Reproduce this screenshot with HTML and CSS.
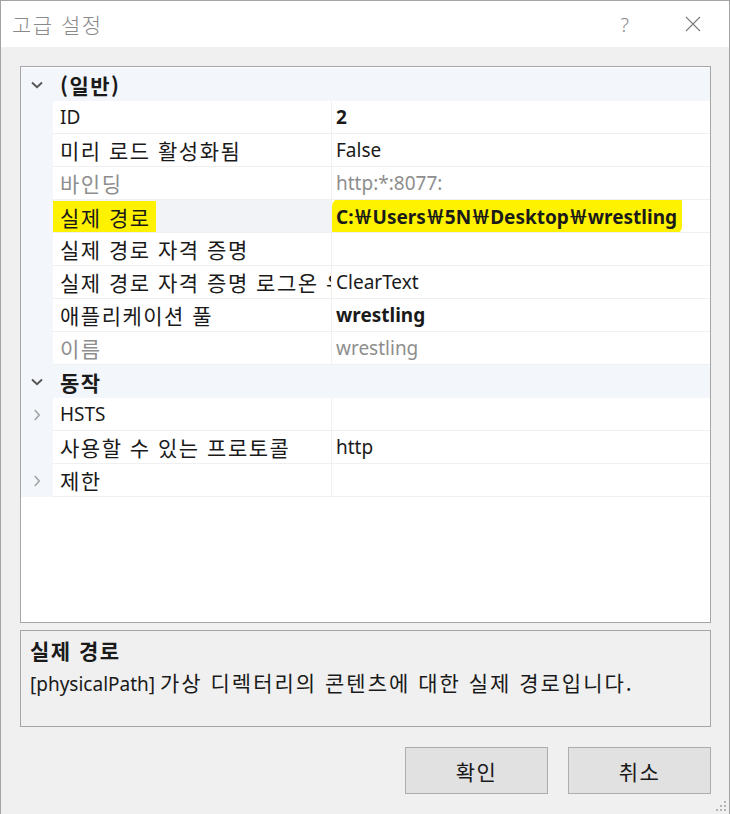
FILE: index.html
```html
<!DOCTYPE html>
<html lang="ko">
<head>
<meta charset="utf-8">
<title>고급 설정</title>
<link rel="stylesheet" href="styles.css">
</head>
<body>
<div class="window">
  <div class="titlebar">
    <span class="title ko">고급 설정</span>
    <span class="help">?</span>
    <svg class="close" width="16" height="16" viewBox="0 0 16 16"><path d="M1 1 L15 15 M15 1 L1 15" stroke="#7a7a7a" stroke-width="1.1" fill="none"/></svg>
  </div>
  <div class="body">
    <div class="grid">
      <div class="cat">
        <div class="gutter"><svg width="12" height="8" viewBox="0 0 12 8"><path d="M1 1.5 L6 6.2 L11 1.5" stroke="#555" stroke-width="1.9" fill="none"/></svg></div>
        <div class="cat-name ko">(일반)</div>
      </div>
      <div class="row">
        <div class="gutter"></div>
        <div class="name">ID</div>
        <div class="value bold">2</div>
      </div>
      <div class="row">
        <div class="gutter"></div>
        <div class="name ko">미리 로드 활성화됨</div>
        <div class="value">False</div>
      </div>
      <div class="row dim">
        <div class="gutter"></div>
        <div class="name ko">바인딩</div>
        <div class="value">http:*:8077:</div>
      </div>
      <div class="row selected">
        <div class="gutter"></div>
        <div class="name ko"><span class="mark mark-name">실제 경로</span></div>
        <div class="value bold"><span class="mark mark-value">C:￦Users￦5N￦Desktop￦wrestling</span></div>
      </div>
      <div class="row">
        <div class="gutter"></div>
        <div class="name ko">실제 경로 자격 증명</div>
        <div class="value"></div>
      </div>
      <div class="row">
        <div class="gutter"></div>
        <div class="name ko clip">실제 경로 자격 증명 로그온 유형</div>
        <div class="value">ClearText</div>
      </div>
      <div class="row">
        <div class="gutter"></div>
        <div class="name ko">애플리케이션 풀</div>
        <div class="value bold">wrestling</div>
      </div>
      <div class="row dim">
        <div class="gutter"></div>
        <div class="name ko">이름</div>
        <div class="value">wrestling</div>
      </div>
      <div class="cat">
        <div class="gutter"><svg width="12" height="8" viewBox="0 0 12 8"><path d="M1 1.5 L6 6.2 L11 1.5" stroke="#555" stroke-width="1.9" fill="none"/></svg></div>
        <div class="cat-name ko">동작</div>
      </div>
      <div class="row">
        <div class="gutter"><svg width="8" height="12" viewBox="0 0 8 12"><path d="M1.8 1 L6.2 6 L1.8 11" stroke="#a3a3a3" stroke-width="1.6" fill="none"/></svg></div>
        <div class="name">HSTS</div>
        <div class="value"></div>
      </div>
      <div class="row">
        <div class="gutter"></div>
        <div class="name ko">사용할 수 있는 프로토콜</div>
        <div class="value">http</div>
      </div>
      <div class="row">
        <div class="gutter"><svg width="8" height="12" viewBox="0 0 8 12"><path d="M1.8 1 L6.2 6 L1.8 11" stroke="#a3a3a3" stroke-width="1.6" fill="none"/></svg></div>
        <div class="name ko">제한</div>
        <div class="value"></div>
      </div>
    </div>
    <div class="desc">
      <div class="desc-title ko">실제 경로</div>
      <div class="desc-text">[physicalPath] <span class="ko wide">가상 디렉터리의 콘텐츠에 대한 실제 경로입니다.</span></div>
    </div>
    <div class="buttons">
      <button class="btn ko">확인</button>
      <button class="btn ko">취소</button>
    </div>
  </div>
  <svg class="grip" width="12" height="12" viewBox="0 0 12 12" fill="#b5b5b5">
    <rect x="9" y="1" width="2" height="2"/>
    <rect x="5" y="5" width="2" height="2"/><rect x="9" y="5" width="2" height="2"/>
    <rect x="1" y="9" width="2" height="2"/><rect x="5" y="9" width="2" height="2"/><rect x="9" y="9" width="2" height="2"/>
  </svg>
</div>
</body>
</html>
```
FILE: styles.css
```css
* { box-sizing: border-box; }
html, body { margin: 0; padding: 0; }
body {
  width: 730px;
  height: 814px;
  overflow: hidden;
  background: #f0f0f0;
  font-family: "Noto Sans", "Noto Sans CJK KR", sans-serif;
  font-size: 19px;
  color: #1a1a1a;
}
.ko {
  font-family: "Noto Sans CJK KR", sans-serif;
  font-size: 21px;
  letter-spacing: 1.5px;
}
.wide { letter-spacing: 2px; }
.window {
  position: relative;
  width: 730px;
  height: 814px;
  border: 1px solid #a3a3a3;
  border-bottom: none;
  background: #f0f0f0;
  display: flex;
  flex-direction: column;
}
.titlebar {
  height: 46px;
  background: #fff;
  display: flex;
  align-items: center;
  padding-left: 11px;
}
.title {
  color: #8a8a8a;
  font-weight: 300;
  flex: 1;
}
.help {
  color: #8a8a8a;
  font-family: "Noto Sans", sans-serif;
  font-weight: 300;
  font-size: 20px;
  margin-right: 56px;
}
.close { margin-right: 28px; }
.body {
  padding: 19px 18px 0 19px;
  display: flex;
  flex-direction: column;
}
.grid {
  height: 557px;
  border: 1px solid #a6a6a6;
  background: #fff;
  display: flex;
  flex-direction: column;
  padding-top: 1px;
}
.cat {
  height: 33px;
  display: flex;
  align-items: center;
  background: #f3f6fa;
}
.gutter {
  width: 32px;
  flex: none;
  align-self: stretch;
  display: flex;
  align-items: center;
  justify-content: center;
  background: #f3f6fa;
  padding-right: 1px;
}
.cat-name {
  font-weight: 700;
  padding-left: 7px;
}
.row {
  height: 33px;
  display: flex;
}
.name, .value {
  border-bottom: 1px solid #f0f0f0;
  display: flex;
  align-items: center;
  white-space: nowrap;
  overflow: hidden;
}
.name {
  width: 279px;
  flex: none;
  border-right: 1px solid #f0f0f0;
  padding-left: 7px;
}
.value {
  flex: 1;
  padding-left: 4px;
}
.bold { font-weight: 700; }
.dim .name, .dim .value { color: #8e8e8e; }
.selected .name { background: #f1f3f7; }
.mark {
  background: #fff200;
  display: inline-flex;
  align-items: center;
}
.mark-name {
  margin-left: -7px;
  padding-left: 7px;
  padding-right: 5px;
  height: 32px;
  margin-top: 1px;
}
.mark-value {
  margin-left: -4px;
  padding-left: 4px;
  padding-right: 5px;
  height: 34px;
  border-radius: 7px 3px 6px 3px;
}
.desc {
  margin-top: 7px;
  height: 97px;
  border: 1px solid #a6a6a6;
  padding: 4px 9px;
}
.desc-title {
  font-weight: 700;
  line-height: 30px;
}
.desc-text {
  line-height: 34px;
}
.buttons {
  margin-top: 20px;
  display: flex;
  justify-content: flex-end;
  gap: 20px;
}
.btn {
  width: 143px;
  height: 47px;
  background: #e1e1e1;
  border: 1px solid #adadad;
  color: #1a1a1a;
  padding: 0;
}
.grip {
  position: absolute;
  right: 2px;
  bottom: 2px;
}
```
